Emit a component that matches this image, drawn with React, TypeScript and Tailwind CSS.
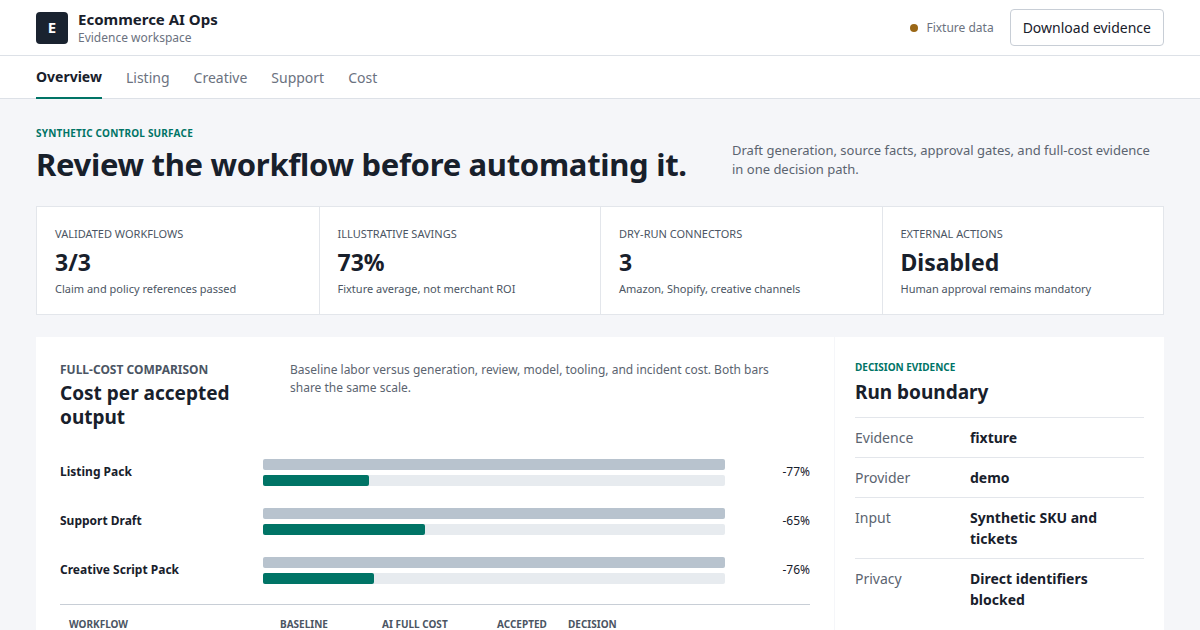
export default function App() {
  const bars = [
    { n: "Listing Pack", ai: 23, p: "-77%" },
    { n: "Support Draft", ai: 35, p: "-65%" },
    { n: "Creative Script Pack", ai: 24, p: "-76%" },
  ];
  const stats = [
    ["VALIDATED WORKFLOWS", "3/3", "Claim and policy references passed"],
    ["ILLUSTRATIVE SAVINGS", "73%", "Fixture average, not merchant ROI"],
    ["DRY-RUN CONNECTORS", "3", "Amazon, Shopify, creative channels"],
    ["EXTERNAL ACTIONS", "Disabled", "Human approval remains mandatory"],
  ];
  const rows = [
    ["Evidence", "fixture"],
    ["Provider", "demo"],
    ["Input", "Synthetic SKU and tickets"],
    ["Privacy", "Direct identifiers blocked"],
  ];
  return (
    <div className="w-[1200px] h-[630px] overflow-hidden bg-[#f5f6f9] text-[#18202b]" style={{ fontFamily: '"Noto Sans", sans-serif' }}>
      <header className="h-[56px] bg-white border-b border-[#dde1e7] flex items-center justify-between px-9">
        <div className="flex items-center gap-2.5">
          <div className="w-8 h-8 rounded-[4px] bg-[#1a2330] text-white flex items-center justify-center text-[15px] font-bold">E</div>
          <div className="leading-tight">
            <div className="text-[15px] font-bold">Ecommerce AI Ops</div>
            <div className="text-[12px] text-[#6b7280] mt-0.5">Evidence workspace</div>
          </div>
        </div>
        <div className="flex items-center gap-4">
          <div className="flex items-center gap-2 text-[12px] text-[#6b7280]"><span className="w-2 h-2 rounded-full bg-[#9a6716]" />Fixture data</div>
          <button className="h-[37px] px-3 border border-[#c8ced6] rounded-[4px] bg-white text-[14px]">Download evidence</button>
        </div>
      </header>
      <nav className="h-[43px] bg-white border-b border-[#dde1e7] flex px-9 gap-6 text-[14px] text-[#6b7280]">
        <div className="flex items-center border-b-2 border-[#007466] font-bold text-[#18202b] mb-[-1px]">Overview</div>
        <div className="flex items-center">Listing</div>
        <div className="flex items-center">Creative</div>
        <div className="flex items-center">Support</div>
        <div className="flex items-center">Cost</div>
      </nav>
      <main className="px-9">
        <div className="flex items-end justify-between pt-[27px] pb-[22px]">
          <div>
            <div className="text-[10px] font-bold text-[#007466] tracking-[0.2px]">SYNTHETIC CONTROL SURFACE</div>
            <h1 className="text-[31px] font-bold leading-tight mt-1 tracking-[-0.3px]">Review the workflow before automating it.</h1>
          </div>
          <p className="w-[432px] text-[13px] text-[#5b6470] leading-[19px] mb-[5px]">Draft generation, source facts, approval gates, and full-cost evidence in one decision path.</p>
        </div>
        <div className="grid grid-cols-4 bg-white border border-[#e3e6eb]">
          {stats.map((s, i) => (
            <div key={i} className={`px-[18px] pt-[19px] pb-[16px] ${i > 0 ? "border-l border-[#e3e6eb]" : ""}`}>
              <div className="text-[11px] text-[#4b5563]">{s[0]}</div>
              <div className="text-[23px] font-bold mt-[6px] leading-tight">{s[1]}</div>
              <div className="text-[11px] text-[#4b5563] mt-[4px]">{s[2]}</div>
            </div>
          ))}
        </div>
        <div className="flex mt-[22px] gap-px">
          <section className="w-[798px] bg-white px-6 pt-6 h-[300px]">
            <div className="flex">
              <div className="w-[230px]">
                <div className="text-[12px] font-bold text-[#4b5563]">FULL-COST COMPARISON</div>
                <div className="text-[19px] font-bold leading-[24px] mt-[2px]">Cost per accepted output</div>
              </div>
              <p className="flex-1 text-[12px] text-[#5b6470] leading-[18px] pr-8">Baseline labor versus generation, review, model, tooling, and incident cost. Both bars share the same scale.</p>
            </div>
            <div className="mt-[30px] flex flex-col gap-[22px]">
              {bars.map((b) => (
                <div key={b.n} className="flex items-center">
                  <div className="w-[203px] text-[12px] font-bold">{b.n}</div>
                  <div className="w-[462px] flex flex-col gap-[5px]">
                    <div className="h-[11px] bg-[#b8c3ce] rounded-[2px]" />
                    <div className="h-[11px] bg-[#e7ebef] rounded-[2px]">
                      <div className="h-full bg-[#007466] rounded-[2px]" style={{ width: `${b.ai}%` }} />
                    </div>
                  </div>
                  <div className="flex-1 text-right text-[12px]">{b.p}</div>
                </div>
              ))}
            </div>
            <div className="mt-[20px] border-t border-[#c8ced6] flex pt-[12px] text-[10px] font-bold text-[#4b5563]">
              <div className="w-[220px] pl-[9px]">WORKFLOW</div>
              <div className="w-[102px]">BASELINE</div>
              <div className="w-[115px]">AI FULL COST</div>
              <div className="w-[71px]">ACCEPTED</div>
              <div>DECISION</div>
            </div>
          </section>
          <aside className="flex-1 bg-white px-5 pt-[23px] h-[300px]">
            <div className="text-[10px] font-bold text-[#007466]">DECISION EVIDENCE</div>
            <div className="text-[19px] font-bold mt-[3px] mb-[11px]">Run boundary</div>
            {rows.map((r) => (
              <div key={r[0]} className="flex border-t border-[#e3e6eb] py-[9px] text-[14px] leading-[21px]">
                <div className="w-[115px] text-[#5b6470]">{r[0]}</div>
                <div className="flex-1 font-bold">{r[1]}</div>
              </div>
            ))}
          </aside>
        </div>
      </main>
    </div>
  );
}
